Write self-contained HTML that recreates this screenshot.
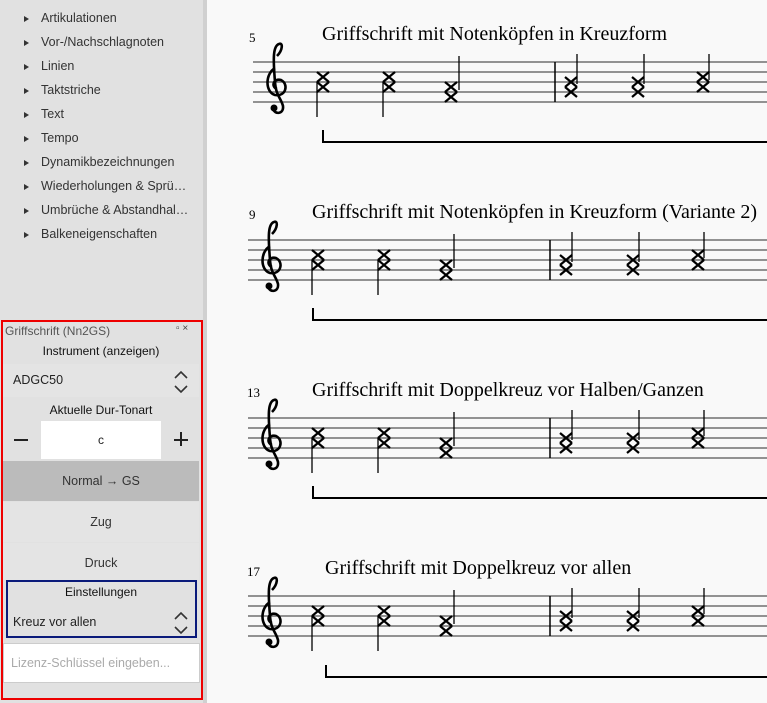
<!DOCTYPE html>
<html><head><meta charset="utf-8"><style>
*{margin:0;padding:0;box-sizing:border-box}
body{width:767px;height:703px;overflow:hidden;background:#f9f9f9;font-family:"Liberation Sans","DejaVu Sans",sans-serif;position:relative}
#left{position:absolute;left:0;top:0;width:203px;height:703px;background:#e1e1e1}
#sb{position:absolute;left:203px;top:0;width:4px;height:703px;background:#d0d0d0}
.it{position:absolute;left:41px;font-size:12.5px;color:#333}
.tri{position:absolute;left:24px;width:0;height:0;border-left:5px solid #333;border-top:3.5px solid transparent;border-bottom:3.5px solid transparent}
#red{position:absolute;left:1px;top:320px;width:202px;height:380px;border:2px solid #e00}
.c{position:absolute;left:3px;width:196px;text-align:center;font-size:12px;color:#111}
.row{position:absolute;left:3px;width:196px}
</style></head><body>
<div id="left">
<div class="tri" style="top:16px"></div><div class="it" style="top:11px">Artikulationen</div>
<div class="tri" style="top:40px"></div><div class="it" style="top:35px">Vor-/Nachschlagnoten</div>
<div class="tri" style="top:64px"></div><div class="it" style="top:59px">Linien</div>
<div class="tri" style="top:88px"></div><div class="it" style="top:83px">Taktstriche</div>
<div class="tri" style="top:112px"></div><div class="it" style="top:107px">Text</div>
<div class="tri" style="top:136px"></div><div class="it" style="top:131px">Tempo</div>
<div class="tri" style="top:160px"></div><div class="it" style="top:155px">Dynamikbezeichnungen</div>
<div class="tri" style="top:184px"></div><div class="it" style="top:179px">Wiederholungen &amp; Sprü…</div>
<div class="tri" style="top:208px"></div><div class="it" style="top:203px">Umbrüche &amp; Abstandhal…</div>
<div class="tri" style="top:232px"></div><div class="it" style="top:227px">Balkeneigenschaften</div>
</div>
<div id="sb"></div>
<div id="red"></div>
<div style="position:absolute;left:5px;top:324px;font-size:12px;color:#555">Griffschrift (Nn2GS)</div>
<div style="position:absolute;left:176px;top:323px;font-size:10px;color:#444">▫ ×</div>
<div class="c" style="top:344px">Instrument (anzeigen)</div>
<div class="row" style="top:364px;height:33px;background:#e4e4e4"></div>
<div style="position:absolute;left:13px;top:373px;font-size:12.5px;color:#222">ADGC50</div>
<svg style="position:absolute;left:173px;top:370px" width="16" height="24"><path d="M2 8 L8 2 L14 8 M2 16 L8 22 L14 16" fill="none" stroke="#333" stroke-width="1.6"/></svg>
<div class="c" style="top:403px">Aktuelle Dur-Tonart</div>
<div style="position:absolute;left:41px;top:421px;width:120px;height:38px;background:#fff;text-align:center;line-height:38px;font-size:12px;color:#222">c</div>
<div style="position:absolute;left:14px;top:439px;width:14px;height:1.6px;background:#222"></div>
<div style="position:absolute;left:174px;top:439px;width:14px;height:1.6px;background:#222"></div>
<div style="position:absolute;left:180px;top:432px;width:1.6px;height:14px;background:#222"></div>
<div class="row" style="top:461px;height:40px;background:#bbbbbb;text-align:center;line-height:40px;font-size:12.5px;color:#333">Normal → GS</div>
<div class="row" style="top:502px;height:40px;background:#e4e4e4;text-align:center;line-height:40px;font-size:12.5px;color:#333">Zug</div>
<div class="row" style="top:543px;height:37px;background:#e4e4e4;text-align:center;line-height:40px;font-size:12.5px;color:#333">Druck</div>
<div style="position:absolute;left:6px;top:580px;width:191px;height:58px;border:2px solid #0a1a7a"></div>
<div class="c" style="top:585px">Einstellungen</div>
<div style="position:absolute;left:13px;top:615px;font-size:12.5px;color:#222">Kreuz vor allen</div>
<svg style="position:absolute;left:173px;top:611px" width="16" height="24"><path d="M2 8 L8 2 L14 8 M2 16 L8 22 L14 16" fill="none" stroke="#333" stroke-width="1.6"/></svg>
<div style="position:absolute;left:3px;top:643px;width:197px;height:40px;background:#fff;border:1px solid #ccc;font-size:12.5px;color:#aaa;padding:12px 7px">Lizenz-Schlüssel eingeben...</div>

<svg style="position:absolute;left:0;top:0" width="767" height="703">
<defs>
<g id="clef"><path d="M14 -6 C20 -12 20 -20 16 -18 C10 -16 10 -4 12 20 C13 34 18 36 20 44 C21 52 12 53 10 47 M12 6 C2 12 2 30 12 33 C23 35 26 22 18 18 C10 16 8 25 14 27" fill="none" stroke="#000" stroke-width="2.6"/><circle cx="11" cy="46" r="3.5"/></g>
<g id="xx"><path d="M-6 -10 L6 0 M6 -10 L-6 0 M-6 0 L6 10 M6 0 L-6 10" stroke="#000" stroke-width="2.2"/></g>
<g id="staff" stroke="#555" stroke-width="1.2">
<line x1="0" y1="0" x2="520" y2="0"/><line x1="0" y1="10" x2="520" y2="10"/><line x1="0" y1="20" x2="520" y2="20"/><line x1="0" y1="30" x2="520" y2="30"/><line x1="0" y1="40" x2="520" y2="40"/></g>
<g id="sys">
<use href="#staff" x="0"/><use href="#clef" x="10" y="0"/>
<use href="#xx" x="70" y="20"/><line x1="64" y1="20" x2="64" y2="55" stroke="#000" stroke-width="1.3"/>
<use href="#xx" x="136" y="20"/><line x1="130" y1="20" x2="130" y2="55" stroke="#000" stroke-width="1.3"/>
<use href="#xx" x="198" y="30"/><line x1="206" y1="28" x2="206" y2="-6" stroke="#000" stroke-width="1.3"/>
<line x1="302" y1="0" x2="302" y2="40" stroke="#000" stroke-width="1.5"/>
<use href="#xx" x="318" y="25"/><line x1="324" y1="22" x2="324" y2="-8" stroke="#000" stroke-width="1.3"/>
<use href="#xx" x="385" y="25"/><line x1="391" y1="22" x2="391" y2="-8" stroke="#000" stroke-width="1.3"/>
<use href="#xx" x="450" y="20"/><line x1="456" y1="18" x2="456" y2="-8" stroke="#000" stroke-width="1.3"/>
</g>
</defs>
<g font-family="Liberation Serif,serif" fill="#000">
<text x="249" y="42" font-size="13">5</text>
<text x="322" y="40" font-size="20">Griffschrift mit Notenköpfen in Kreuzform</text>
<text x="249" y="219" font-size="13">9</text>
<text x="312" y="218" font-size="20">Griffschrift mit Notenköpfen in Kreuzform (Variante 2)</text>
<text x="247" y="397" font-size="13">13</text>
<text x="312" y="396" font-size="20">Griffschrift mit Doppelkreuz vor Halben/Ganzen</text>
<text x="247" y="576" font-size="13">17</text>
<text x="325" y="574" font-size="20">Griffschrift mit Doppelkreuz vor allen</text>
</g>
<use href="#sys" x="253" y="62"/>
<use href="#sys" x="248" y="240"/>
<use href="#sys" x="248" y="418"/>
<use href="#sys" x="248" y="596"/>
<g stroke="#000" stroke-width="2" fill="none">
<path d="M323 130 V142 H767"/>
<path d="M313 308 V320 H767"/>
<path d="M313 486 V498 H767"/>
<path d="M326 665 V677 H767"/>
</g>
</svg>
</body></html>
